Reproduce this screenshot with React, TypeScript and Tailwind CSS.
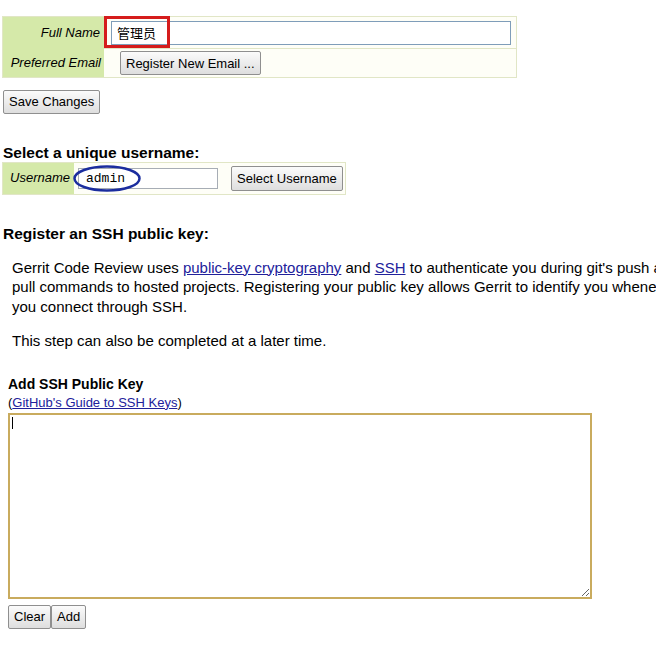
import React from "react";

const btn =
  "h-[24px] px-[5px] text-[13px] leading-none text-black border border-[#8f8f8f] rounded-[2px] bg-linear-to-b from-[#fbfbfb] to-[#dedede] font-['Liberation_Sans',Arial,sans-serif]";

export default function App() {
  const [fullName, setFullName] = React.useState("管理员");
  const [username, setUsername] = React.useState("admin");
  const [sshKey, setSshKey] = React.useState("");

  return (
    <div className="w-[656px] h-[653px] overflow-hidden bg-white text-black font-['Liberation_Sans',Arial,sans-serif]">
      {/* contact info */}
      <div className="ml-[2px] mt-[16px] w-[515px] border border-[#e1e6c6] bg-[#fefef7]">
        <div className="flex h-[31px]">
          <div className="w-[101px] bg-[#d5e9a9] flex items-center justify-end pr-[4px] italic text-[13px]">
            Full Name
          </div>
          <div className="flex-1 flex items-center pl-[7px]">
            <div className="relative">
              <input
                value={fullName}
                onChange={(e) => setFullName(e.target.value)}
                className="block w-[400px] h-[24px] border border-[#7f9db9] bg-white px-[5px] text-[13px] outline-none font-['Liberation_Sans','Noto_Sans_CJK_SC',sans-serif]"
              />
              <div className="absolute left-[-7px] top-[-5px] w-[66px] h-[32px] border-[3px] border-[#d51c1c] pointer-events-none" />
            </div>
          </div>
        </div>
        <div className="flex h-[29px]">
          <div className="w-[101px] bg-[#d5e9a9] flex items-center justify-end pr-[3px] italic text-[13px]">
            Preferred Email
          </div>
          <div className="flex-1 flex items-center pl-[16px] border-t border-[#e1e6c6]">
            <button className={btn}>Register New Email ...</button>
          </div>
        </div>
      </div>

      <div className="ml-[3px] mt-[11px]">
        <button className={btn + " px-[3px]"}>Save Changes</button>
      </div>

      {/* username */}
      <h2 className="ml-[3px] mt-[30px] text-[15.5px] leading-[18px] font-bold">Select a unique username:</h2>
      <div className="ml-[2px] w-[344px] h-[33px] flex items-center border border-[#e1e6c6] bg-[#fefef7]">
        <div className="w-[71px] h-full bg-[#d5e9a9] flex items-center justify-end pr-[4px] italic text-[13px]">
          Username
        </div>
        <div className="relative ml-[4px]">
          <input
            value={username}
            onChange={(e) => setUsername(e.target.value)}
            className="block w-[140px] h-[21px] border border-[#a7adb5] bg-white px-[7px] text-[13px] outline-none font-['Liberation_Mono','Courier_New',monospace]"
          />
          <svg className="absolute left-[-5px] top-[-3px] pointer-events-none" width="68" height="27" viewBox="0 0 68 27">
            <ellipse cx="34" cy="13.5" rx="32.5" ry="12" fill="none" stroke="#1b2d9e" strokeWidth="2.5" />
          </svg>
        </div>
        <button className={btn + " ml-[13px] h-[25px]"}>Select Username</button>
      </div>

      {/* ssh key */}
      <h2 className="ml-[3px] mt-[30px] text-[15.5px] leading-[18px] font-bold">Register an SSH public key:</h2>
      <div className="ml-[12px] mt-[15px] w-[720px] text-[15px] leading-[19.5px] whitespace-nowrap">
        <p>
          Gerrit Code Review uses <a href="#" className="text-[#21219b] underline">public-key cryptography</a> and{" "}
          <a href="#" className="text-[#21219b] underline">SSH</a> to authenticate you during git's push and
          <br />
          pull commands to hosted projects. Registering your public key allows Gerrit to identify you whenever
          <br />
          you connect through SSH.
        </p>
        <p className="mt-[15px]">This step can also be completed at a later time.</p>
      </div>

      <div className="ml-[8px] mt-[25px]">
        <div className="text-[14px] leading-[17px] font-bold">Add SSH Public Key</div>
        <div className="text-[13px] leading-[19px]">
          (<a href="#" className="text-[#21219b] underline">GitHub's Guide to SSH Keys</a>)
        </div>
        <div className="relative mt-[1px]">
          <textarea
            value={sshKey}
            onChange={(e) => setSshKey(e.target.value)}
            className="block w-[584px] h-[186px] border-2 border-[#c9ab5e] bg-white p-[2px] text-[13px] outline-none font-['Liberation_Mono',monospace]"
          />
          <div className="absolute left-[4px] top-[4px] w-px h-[12px] bg-black pointer-events-none" />
        </div>
        <div className="flex mt-[6px]">
          <button className={btn + " px-[3px]"}>Clear</button>
          <button className={btn + " px-[3px]"}>Add</button>
        </div>
      </div>
    </div>
  );
}
